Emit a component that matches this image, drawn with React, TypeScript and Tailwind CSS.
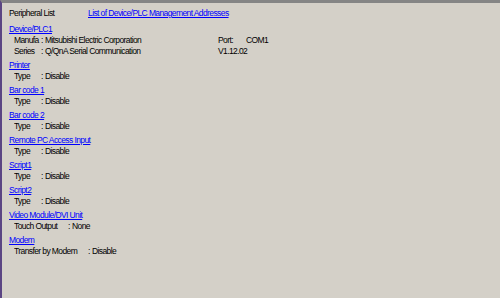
import React from "react";

const font = { fontFamily: '"Liberation Sans", Arial, sans-serif' };

function Heading({ children }: { children: React.ReactNode }) {
  return (
    <div className="h-[11px] leading-[11px] text-[#0000ff] underline underline-offset-[1px] whitespace-nowrap">{children}</div>
  );
}

function Row({ label, value, lw = "w-[27px]", extra }: { label: string; value: string; lw?: string; extra?: React.ReactNode }) {
  return (
    <div className="flex h-[11px] leading-[11px] pl-[5px] text-[#000000]">
      <div className={`${lw} overflow-hidden whitespace-nowrap`}>{label}</div>
      <div className="w-[4px]">:</div>
      <div className="w-[173px] whitespace-nowrap">{value}</div>
      {extra}
    </div>
  );
}

function Group({ title, label, value, lw }: { title: string; label: string; value: string; lw?: string }) {
  return (
    <div className="mt-[3px]">
      <Heading>{title}</Heading>
      <Row label={label} value={value} lw={lw} />
    </div>
  );
}

export default function App() {
  return (
    <div
      style={font}
      className="w-[500px] h-[298px] bg-[#d4d0c8] border-l-2 border-l-[#5b4583] border-t-[3px] border-t-[#858585] text-[8.5px] tracking-[-0.6px] overflow-hidden"
    >
      <div className="pl-[7px] pt-[3px]">
        <div className="flex h-[14px] leading-[14px]">
          <div className="w-[79px] text-black">Peripheral List</div>
          <div className="text-[#0000ff] underline underline-offset-[1px]">List of Device/PLC Management Addresses</div>
        </div>
        <div className="mt-[4px]">
          <Heading>Device/PLC1</Heading>
          <Row
            label="Manufa"
            value="Mitsubishi Electric Corporation"
            extra={
              <div className="flex">
                <div className="w-[28px]">Port:</div>
                <div>COM1</div>
              </div>
            }
          />
          <Row label="Series" value="Q/QnA Serial Communication" extra={<div>V1.12.02</div>} />
        </div>
        <Group title="Printer" label="Type" value="Disable" />
        <Group title="Bar code 1" label="Type" value="Disable" />
        <Group title="Bar code 2" label="Type" value="Disable" />
        <Group title="Remote PC Access Input" label="Type" value="Disable" />
        <Group title="Script1" label="Type" value="Disable" />
        <Group title="Script2" label="Type" value="Disable" />
        <Group title="Video Module/DVI Unit" label="Touch Output" value="None" lw="w-[54px]" />
        <Group title="Modem" label="Transfer by Modem" value="Disable" lw="w-[74px]" />
      </div>
    </div>
  );
}
